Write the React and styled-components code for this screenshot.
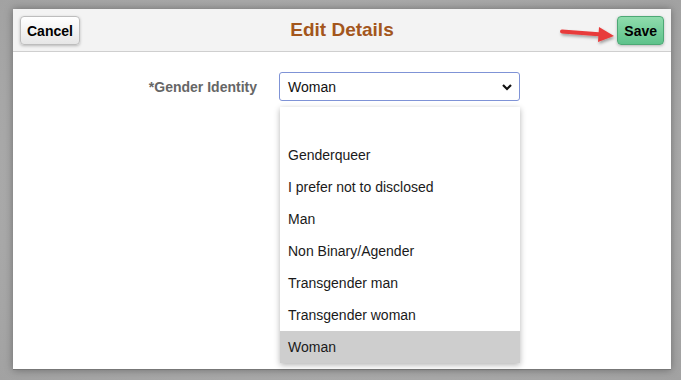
import React from "react";
import styled, { createGlobalStyle } from "styled-components";

const Global = createGlobalStyle`
  html, body { margin: 0; padding: 0; }
  body {
    background: #a9a9a9;
    font-family: "Liberation Sans", Arial, sans-serif;
    width: 681px;
    height: 380px;
    overflow: hidden;
  }
`;

const Page = styled.div`
  width: 681px;
  height: 380px;
  box-sizing: border-box;
  padding: 9px 10px 10px 13px;
  background: radial-gradient(ellipse at center, #b8b8b8 0%, #a2a2a2 100%);
`;

const Dialog = styled.div`
  position: relative;
  width: 658px;
  height: 361px;
  background: #fff;
  display: flex;
  flex-direction: column;
  border-bottom: 1px solid #777;
  box-sizing: border-box;
  box-shadow: 0 0 8px rgba(0, 0, 0, 0.35);
`;

const Header = styled.div`
  height: 42px;
  background: #f3f3f3;
  border-bottom: 1px solid #cfcfcf;
  display: flex;
  align-items: center;
  justify-content: space-between;
  padding: 0 7px;
  position: relative;
`;

const Title = styled.div`
  position: absolute;
  left: 0;
  right: 0;
  text-align: center;
  font-size: 19px;
  font-weight: bold;
  color: #a3561c;
  pointer-events: none;
  top: 10px;
`;

const Button = styled.button`
  height: 29px;
  padding: 0 6px;
  font-family: "Liberation Sans", Arial, sans-serif;
  font-size: 14px;
  font-weight: bold;
  color: #000;
  border-radius: 4px;
  border: 1px solid ${(p) => (p.$primary ? "#4da875" : "#bdbdbd")};
  background: ${(p) =>
    p.$primary
      ? "linear-gradient(#8fdcac, #5ec28b)"
      : "linear-gradient(#ffffff, #e6e6e6)"};
  box-shadow: 0 1px 3px rgba(0, 0, 0, 0.25);
  margin-top: 1px;
  position: relative;
  z-index: 1;
`;

const Body = styled.div`
  flex: 1;
  padding-top: 20px;
`;

const Row = styled.div`
  display: grid;
  grid-template-columns: 244px 241px;
  column-gap: 22px;
  align-items: center;
  position: relative;
`;

const Label = styled.label`
  text-align: right;
  font-size: 14px;
  font-weight: bold;
  color: #666;
`;

const Select = styled.div`
  height: 29px;
  box-sizing: border-box;
  border: 1px solid #7f93d6;
  border-radius: 3px;
  display: flex;
  align-items: center;
  justify-content: space-between;
  padding: 0 6px 0 8px;
  font-size: 14px;
  color: #111;
`;

const List = styled.div`
  position: absolute;
  left: 267px;
  top: 35px;
  width: 240px;
  background: #fff;
  box-shadow: 0 2px 6px rgba(0, 0, 0, 0.3);
  display: flex;
  flex-direction: column;
`;

const Item = styled.div`
  height: 32px;
  display: flex;
  align-items: center;
  padding-left: 8px;
  font-size: 14px;
  color: #1a1a1a;
  background: ${(p) => (p.$active ? "#cecece" : "#fff")};
`;

const Arrow = styled.svg`
  position: absolute;
  left: 545px;
  top: 9px;
`;

const options = [
  "",
  "Genderqueer",
  "I prefer not to disclosed",
  "Man",
  "Non Binary/Agender",
  "Transgender man",
  "Transgender woman",
  "Woman",
];

export default function App() {
  return (
    <>
      <Global />
      <Page>
        <Dialog>
          <Header>
            <Button>Cancel</Button>
            <Title>Edit Details</Title>
            <Button $primary>Save</Button>
            <Arrow width="60" height="30" viewBox="0 0 60 30">
              <defs>
                <filter id="sh" x="-20%" y="-50%" width="140%" height="200%">
                  <feDropShadow dx="1" dy="2" stdDeviation="1.5" floodColor="#000" floodOpacity="0.35" />
                </filter>
              </defs>
              <g filter="url(#sh)">
                <path d="M4 13.5 L44 16.5" stroke="#e83a3a" strokeWidth="4" strokeLinecap="round" />
                <path d="M41 9 L56 18 L40 24 Z" fill="#e83a3a" />
              </g>
            </Arrow>
          </Header>
          <Body>
            <Row>
              <Label>*Gender Identity</Label>
              <Select>
                <span>Woman</span>
                <svg width="12" height="8" viewBox="0 0 12 8">
                  <path d="M2 2 L6 6 L10 2" fill="none" stroke="#111" strokeWidth="2.2" />
                </svg>
              </Select>
              <List>
                {options.map((o, i) => (
                  <Item key={i} $active={o === "Woman"}>
                    {o}
                  </Item>
                ))}
              </List>
            </Row>
          </Body>
        </Dialog>
      </Page>
    </>
  );
}
